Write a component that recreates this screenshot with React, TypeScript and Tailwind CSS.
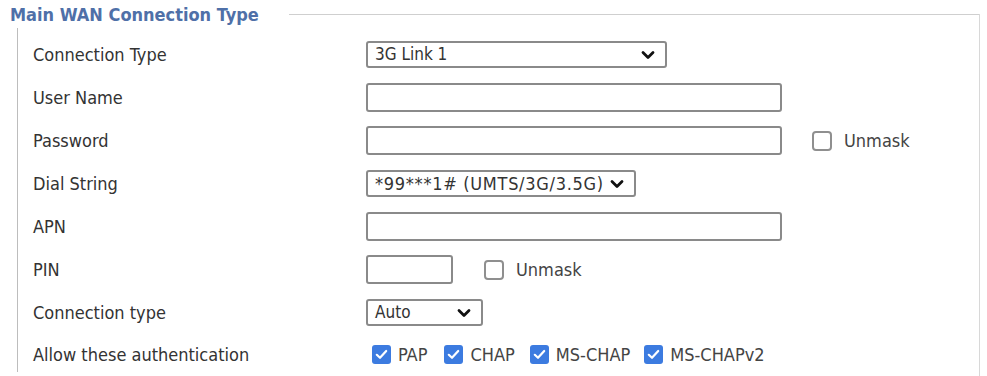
import type { ReactNode } from "react";

const font = "font-['DejaVu_Sans_Condensed','DejaVu_Sans',sans-serif]";

function Chevron() {
  return (
    <svg width="14" height="10" viewBox="0 0 14 10" className="shrink-0">
      <path d="M2 2.5 L7 7.5 L12 2.5" fill="none" stroke="#111" strokeWidth="2.8" strokeLinecap="round" strokeLinejoin="round" />
    </svg>
  );
}

function Select({ value, width, text = "text-[17px]" }: { value: string; width: string; text?: string }) {
  return (
    <div className={`${width} flex h-[27px] items-center justify-between rounded-[3px] border-2 border-[#8a8a8a] bg-white pl-[7px] pr-[10px] text-[#333]`}>
      <span className={`whitespace-nowrap ${text}`}>{value}</span>
      <Chevron />
    </div>
  );
}

function TextBox({ width }: { width: string }) {
  return <div className={`${width} h-[29px] rounded-[3px] border-2 border-[#8a8a8a] bg-white`} />;
}

function Box({ checked }: { checked?: boolean }) {
  if (checked) {
    return (
      <span className="flex h-[19px] w-[19px] shrink-0 items-center justify-center rounded-[3px] bg-[#3c7be0]">
        <svg width="13" height="11" viewBox="0 0 13 11">
          <path d="M1.8 5.8 L5 8.8 L11.2 2" fill="none" stroke="#fff" strokeWidth="2.2" strokeLinecap="round" strokeLinejoin="round" />
        </svg>
      </span>
    );
  }
  return <span className="h-[20px] w-[20px] shrink-0 rounded-[4px] border-2 border-[#8f8f8f] bg-white" />;
}

function Unmask({ gap }: { gap: string }) {
  return (
    <div className={`${gap} flex items-center gap-[12px]`}>
      <Box />
      <span className="text-[18px] text-[#444]">Unmask</span>
    </div>
  );
}

function Row({ label, children, h = "h-[43px]" }: { label: string; children: ReactNode; h?: string }) {
  return (
    <div className={`flex ${h} items-center`}>
      <div className="w-[333px] shrink-0 text-[18px] text-[#333]">{label}</div>
      <div className="flex items-center">{children}</div>
    </div>
  );
}

export default function App() {
  const auth = [
    { name: "PAP", mr: "mr-[17px]" },
    { name: "CHAP", mr: "mr-[15px]" },
    { name: "MS-CHAP", mr: "mr-[14px]" },
    { name: "MS-CHAPv2", mr: "" },
  ];
  return (
    <div className={`h-[376px] w-[987px] overflow-hidden bg-white ${font}`}>
      {/* legend + top rule */}
      <div className="flex h-[28px] items-center pl-[10px] pr-[7px]">
        <span className="text-[18px] font-bold text-[#4f70a8]">Main WAN Connection Type</span>
        <div className="ml-[30px] mt-[14px] h-px flex-1 self-start bg-[#cfcfcf]" />
        <div className="mt-[14px] h-[362px] w-px self-start bg-[#d8d8d8]" />
      </div>

      {/* fieldset body */}
      <div className="ml-[17px] mr-[7px] h-[344px] border-l border-[#bdbdbd] pl-[15px] pt-[5px]">
        <Row label="Connection Type">
          <Select value="3G Link 1" width="w-[301px]" />
        </Row>
        <Row label="User Name">
          <TextBox width="w-[416px]" />
        </Row>
        <Row label="Password">
          <TextBox width="w-[416px]" />
          <Unmask gap="ml-[30px]" />
        </Row>
        <Row label="Dial String">
          <Select value="*99***1# (UMTS/3G/3.5G)" width="w-[270px]" text="text-[18px] tracking-[0.7px]" />
        </Row>
        <Row label="APN">
          <TextBox width="w-[416px]" />
        </Row>
        <Row label="PIN">
          <TextBox width="w-[87px]" />
          <Unmask gap="ml-[31px]" />
        </Row>
        <Row label="Connection type">
          <Select value="Auto" width="w-[117px]" />
        </Row>
        <Row label="Allow these authentication" h="h-[40px]">
          <div className="ml-[6px] flex items-center">
            {auth.map((a) => (
              <div key={a.name} className={`${a.mr} flex items-center gap-[7px]`}>
                <Box checked />
                <span className="text-[18px] text-[#444]">{a.name}</span>
              </div>
            ))}
          </div>
        </Row>
      </div>
    </div>
  );
}
